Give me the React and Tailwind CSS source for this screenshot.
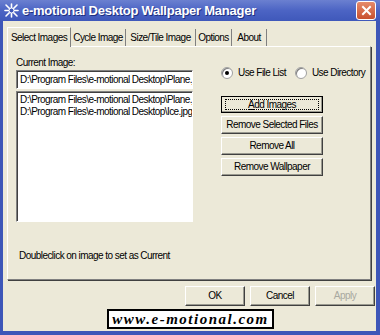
import React from 'react';

const font = { fontFamily: '"Liberation Sans", Arial, sans-serif' };

// classic raised 3D button
const Btn = ({ children, className = '', focus = false, disabled = false }) => (
    <div
        className={`flex items-center justify-center bg-[#ece9d8] border border-t-white border-l-white border-b-[#404040] border-r-[#404040] shadow-[inset_-1px_-1px_0_#9a9a90] whitespace-nowrap leading-none ${disabled ? 'text-[#a8a8a0]' : 'text-black'} ${className}`}
    >
        {focus ? (
            <div className="w-full h-full flex items-center justify-center outline outline-1 outline-black">
                <div className="flex items-center justify-center w-[calc(100%-6px)] h-[calc(100%-4px)] border border-dotted border-black">
                    {children}
                </div>
            </div>
        ) : (
            children
        )}
    </div>
);

const Tab = ({ label, active, w }) => (
    <div
        className={`flex items-center justify-center whitespace-nowrap text-black ${w} ${
            active
                ? 'h-[20px] bg-[#ece9d8] border border-b-0 border-t-white border-l-white border-r-[#808080] -mb-px z-10 relative'
                : 'h-[17px] border-r border-r-[#808080]'
        }`}
    >
        {label}
    </div>
);

const Radio = ({ checked, label }) => (
    <div className="flex items-center gap-[5px] whitespace-nowrap text-black">
        <div className="w-[12px] h-[12px] rounded-full bg-white border border-[#a0a0a0] shadow-[inset_1px_1px_0_#808080] flex items-center justify-center">
            {checked && <div className="w-[4px] h-[4px] rounded-full bg-black" />}
        </div>
        <span>{label}</span>
    </div>
);

export default function App() {
    return (
        <div style={font} className="w-[380px] h-[335px] bg-[#3d56b8] flex flex-col overflow-hidden text-[10px] tracking-[-0.55px]">
            {/* title bar */}
            <div className="h-[21px] shrink-0 flex items-center pl-[4px] pr-[4px] bg-gradient-to-b from-[#6b80d0] via-[#4c64c4] to-[#3f58ba]">
                <svg width="15" height="15" viewBox="0 0 15 15" className="shrink-0">
                    <g stroke="white" strokeWidth="1.6" strokeLinecap="round">
                        <line x1="2" y1="2" x2="13" y2="13" />
                        <line x1="13" y1="2" x2="2" y2="13" />
                        <line x1="7.5" y1="1" x2="7.5" y2="14" />
                        <line x1="1" y1="7.5" x2="14" y2="7.5" />
                    </g>
                    <circle cx="7.5" cy="7.5" r="2.5" fill="#3f58ba" stroke="white" strokeWidth="1" />
                </svg>
                <span className="ml-[3px] text-white font-bold text-[13px] tracking-[-0.25px] whitespace-nowrap [text-shadow:1px_1px_0_#1e2f80]">
                    e-motional Desktop Wallpaper Manager
                </span>
                <div className="ml-auto w-[20px] h-[19px] rounded-[3px] border border-white bg-gradient-to-b from-[#e58a6a] to-[#c8502e] flex items-center justify-center">
                    <svg width="11" height="11" viewBox="0 0 11 11">
                        <g stroke="white" strokeWidth="2" strokeLinecap="square">
                            <line x1="2" y1="2" x2="9" y2="9" />
                            <line x1="9" y1="2" x2="2" y2="9" />
                        </g>
                    </svg>
                </div>
            </div>

            {/* client area */}
            <div className="flex-1 ml-[3px] mr-[4px] mb-[4px] bg-[#ece9d8] flex flex-col px-[4px] pt-[5px]">
                {/* tabs */}
                <div className="flex items-end h-[20px] relative">
                    <Tab label="Select Images" active w="w-[64px]" />
                    <Tab label="Cycle Image" w="w-[55px]" />
                    <Tab label="Size/Tile Image" w="w-[70px]" />
                    <Tab label="Options" w="w-[36px]" />
                    <Tab label="About" w="w-[35px]" />
                </div>

                {/* panel */}
                <div className="w-[364px] h-[234px] border border-t-white border-l-white border-b-[#808080] border-r-[#808080] shadow-[1px_1px_0_#404040] flex flex-col pl-[8px] pt-[9px]">
                    <div className="flex">
                        <div className="w-[177px] flex flex-col">
                            <div className="leading-[13px] text-black">Current Image:</div>
                            <div className="mt-[1px] h-[19px] bg-white border border-t-[#808080] border-l-[#808080] border-b-white border-r-white shadow-[inset_1px_1px_0_#404040] flex items-center px-[3px] whitespace-nowrap overflow-hidden text-black">
                                D:\Program Files\e-motional Desktop\Plane.jpg
                            </div>
                            <div className="mt-[2px] h-[131px] bg-white border border-t-[#808080] border-l-[#808080] border-b-white border-r-white shadow-[inset_1px_1px_0_#404040] px-[3px] pt-[2px] leading-[12px] whitespace-nowrap overflow-hidden text-black">
                                <div>D:\Program Files\e-motional Desktop\Plane.jpg</div>
                                <div>D:\Program Files\e-motional Desktop\Ice.jpg</div>
                            </div>
                        </div>
                        <div className="flex flex-col ml-[28px] pt-[9px]">
                            <div className="flex gap-[9px]">
                                <Radio checked label="Use File List" />
                                <Radio label="Use Directory" />
                            </div>
                            <div className="flex flex-col gap-[3px] mt-[16px] w-[102px]">
                                <Btn focus className="h-[17px]">
                                    <span><span className="underline">A</span>dd Images</span>
                                </Btn>
                                <Btn className="h-[18px]">Remove Selected Files</Btn>
                                <Btn className="h-[18px]">Remove All</Btn>
                                <Btn className="h-[18px]">Remove Wallpaper</Btn>
                            </div>
                        </div>
                    </div>
                    <div className="mt-[26px] ml-[3px] text-black whitespace-nowrap">
                        Doubleclick on image to set as Current
                    </div>
                </div>

                {/* dialog buttons */}
                <div className="flex justify-end gap-[5px] mt-[6px] w-[368px]">
                    <Btn className="w-[60px] h-[20px]">OK</Btn>
                    <Btn className="w-[60px] h-[20px]">Cancel</Btn>
                    <Btn disabled className="w-[60px] h-[20px]">Apply</Btn>
                </div>

                {/* banner */}
                <div className="mt-[3px] ml-[100px] w-[167px] h-[20px] bg-white border-2 border-black flex items-center justify-center">
                    <span className="font-['Liberation_Serif',serif] italic font-bold text-[15px] tracking-[1.5px] text-black">
                        www.e-motional.com
                    </span>
                </div>
            </div>
        </div>
    );
}
